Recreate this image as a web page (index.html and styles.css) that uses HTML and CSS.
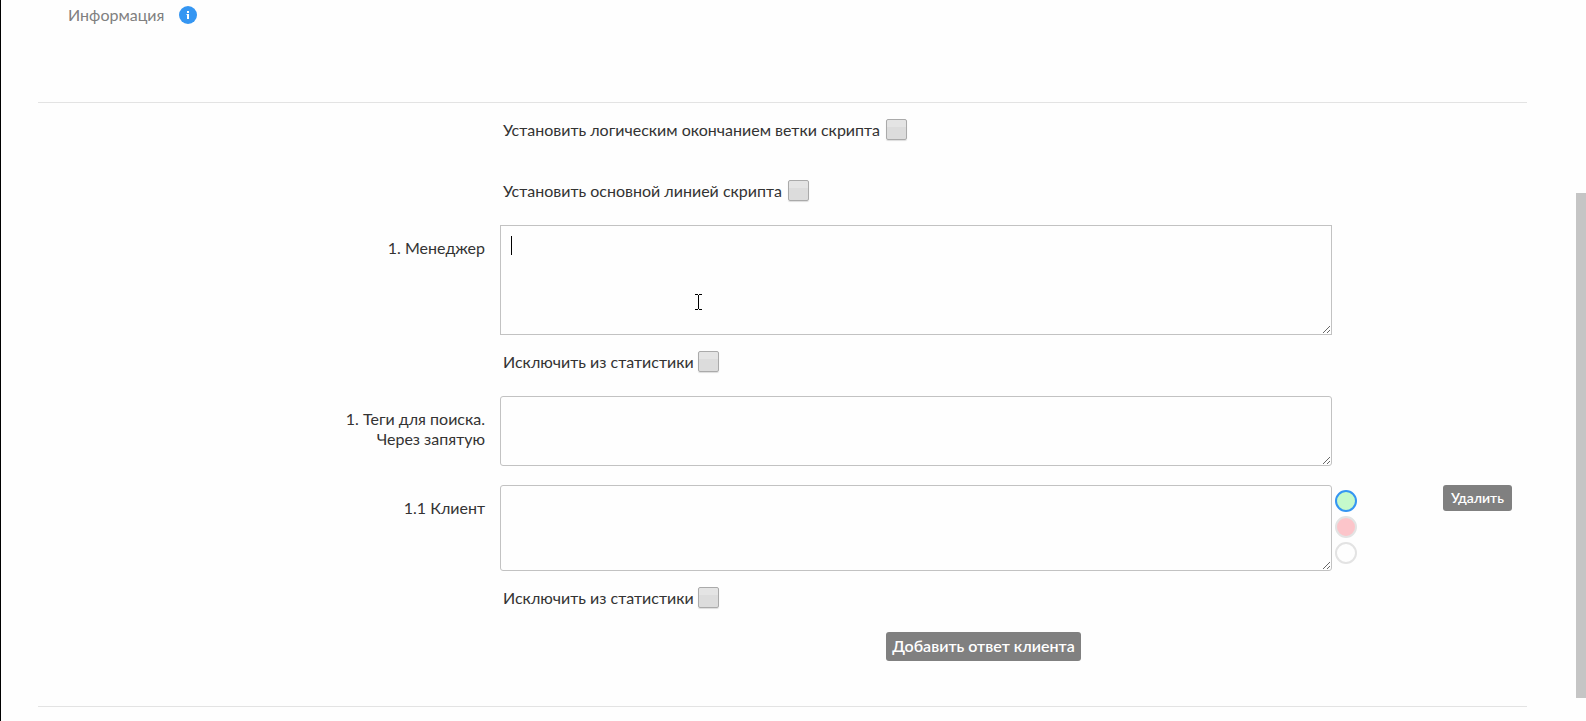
FILE: index.html
```html
<!DOCTYPE html>
<html lang="ru">
<head>
<meta charset="utf-8">
<title>Редактор скрипта</title>
<link rel="stylesheet" href="styles.css">
</head>
<body>
<main class="page">
  <header class="info">
    <span>Информация</span>
    <svg class="info-icon" viewBox="0 0 18 18" role="img" aria-label="Справка">
      <circle cx="9" cy="9" r="9" fill="#3596f2"/>
      <path d="M8 5h2v2H8zM7.500 8H10v5H8V9h-.5z" fill="#fff"/>
    </svg>
  </header>

  <form class="editor">
    <label class="check">Установить логическим окончанием ветки скрипта <input type="checkbox"></label>
    <label class="check check-main">Установить основной линией скрипта <input type="checkbox"></label>

    <div class="row">
      <label class="caption" for="manager">1. Менеджер</label>
      <div class="field">
        <textarea id="manager" class="area area-manager"></textarea>
        <span class="caret"></span>
        <svg class="pointer" viewBox="0 0 7 16" aria-hidden="true">
          <path d="M0 0h3v1H0zM4 0h3v1H4zM3 1h1v14H3zM0 15h3v1H0zM4 15h3v1H4z"/>
        </svg>
      </div>
    </div>
    <label class="check check-stat">Исключить из статистики <input type="checkbox"></label>

    <div class="row row-tags">
      <label class="caption" for="tags">1. Теги для поиска.<br>Через запятую</label>
      <div class="field"><textarea id="tags" class="area area-tags"></textarea></div>
    </div>

    <div class="row row-client">
      <label class="caption" for="client">1.1 Клиент</label>
      <div class="field"><textarea id="client" class="area area-client"></textarea></div>
      <div class="side">
        <div class="colors">
          <input type="radio" name="color" class="color green" aria-label="Зелёный" checked>
          <input type="radio" name="color" class="color red" aria-label="Красный">
          <input type="radio" name="color" class="color white" aria-label="Белый">
        </div>
        <button type="button" class="btn btn-small">Удалить</button>
      </div>
    </div>
    <label class="check check-stat">Исключить из статистики <input type="checkbox"></label>

    <div class="actions"><button type="button" class="btn">Добавить ответ клиента</button></div>
  </form>
</main>
<div class="track"><div class="thumb"></div></div>
</body>
</html>
```
FILE: styles.css
```css
* { box-sizing: border-box; }

body {
  margin: 0;
  min-height: 100vh;
  display: flex;
  background: #fefefe;
  border-left: 1px solid #000;
  color: #333;
  font: 16px/20px Lato, Roboto, sans-serif;
}

.page {
  flex: 1;
  padding: 0 49px 0 37px;
}

.info {
  display: flex;
  align-items: center;
  gap: 15px;
  height: 102px;
  padding: 0 30px 72px;
  color: #808080;
}

.info-icon { width: 18px; height: 18px; }

.editor {
  display: grid;
  grid-template-columns: 462fr 832fr 195fr;
  border-top: 1px solid #e3e3e3;
  border-bottom: 1px solid #e3e3e3;
  padding: 16px 0 45px;
}

.check {
  grid-column: 2 / 4;
  justify-self: start;
  display: flex;
  align-items: center;
  gap: 6px;
  padding-left: 3px;
}

.check-main { margin: 40px 0 24px; }
.check-stat { gap: 4px; margin-top: 16px; }

.check input {
  appearance: none;
  width: 21px;
  height: 21px;
  margin: 0;
  border: 1px solid #aaa;
  border-radius: 2px;
  background: linear-gradient(#e4e4e4 0 38%, #dcdcdc 38%);
  box-shadow: 0 1px 1px #ddd;
}

.row {
  grid-column: 1 / -1;
  display: grid;
  grid-template-columns: subgrid;
}

.row-tags { margin-top: 24px; }
.row-client { margin-top: 19px; }

.caption {
  padding: 13px 15px 0 0;
  text-align: right;
}

.field { position: relative; }

.area {
  display: block;
  width: 100%;
  padding: 10px;
  border: 1px solid #c2c2c2;
  border-radius: 3px;
  background: #fefefe;
  font: inherit;
  outline: 0;
}

.area-manager { height: 110px; border-radius: 0; }
.area-tags { height: 70px; }
.area-client { height: 86px; }

.caret {
  position: absolute;
  left: 11px;
  top: 11px;
  width: 1px;
  height: 19px;
  background: #000;
}

.pointer {
  position: absolute;
  left: 195px;
  top: 69px;
  width: 7px;
  height: 16px;
}

.side {
  display: flex;
  justify-content: space-between;
  align-items: flex-start;
  padding: 0 15px 0 3px;
}

.colors {
  display: flex;
  flex-direction: column;
  gap: 4px;
  padding-top: 5px;
}

.color {
  appearance: none;
  width: 22px;
  height: 22px;
  margin: 0;
  border: 2px solid #e3e3e3;
  border-radius: 50%;
}

.color:checked { border-color: #3596f2; }
.green { background: #c5facb; }
.red { background: #fcc5ca; }

.btn {
  height: 29px;
  padding: 0 6px 1px;
  border: 0;
  border-radius: 3px;
  background: #808080;
  color: #fff;
  font: 600 16px/20px Lato, Roboto, sans-serif;
}

.btn-small {
  height: 26px;
  padding: 0 8px 1px;
  font-size: 14px;
}

.actions {
  grid-column: 2 / 4;
  display: flex;
  justify-content: center;
  margin-top: 24px;
  padding-right: 60px;
}

.track {
  display: flex;
  flex-direction: column;
  width: 10px;
}

.track::before { content: ""; flex: 193; }
.thumb { flex: 505; background: #c5c5c5; }
.track::after { content: ""; flex: 23; }
```
